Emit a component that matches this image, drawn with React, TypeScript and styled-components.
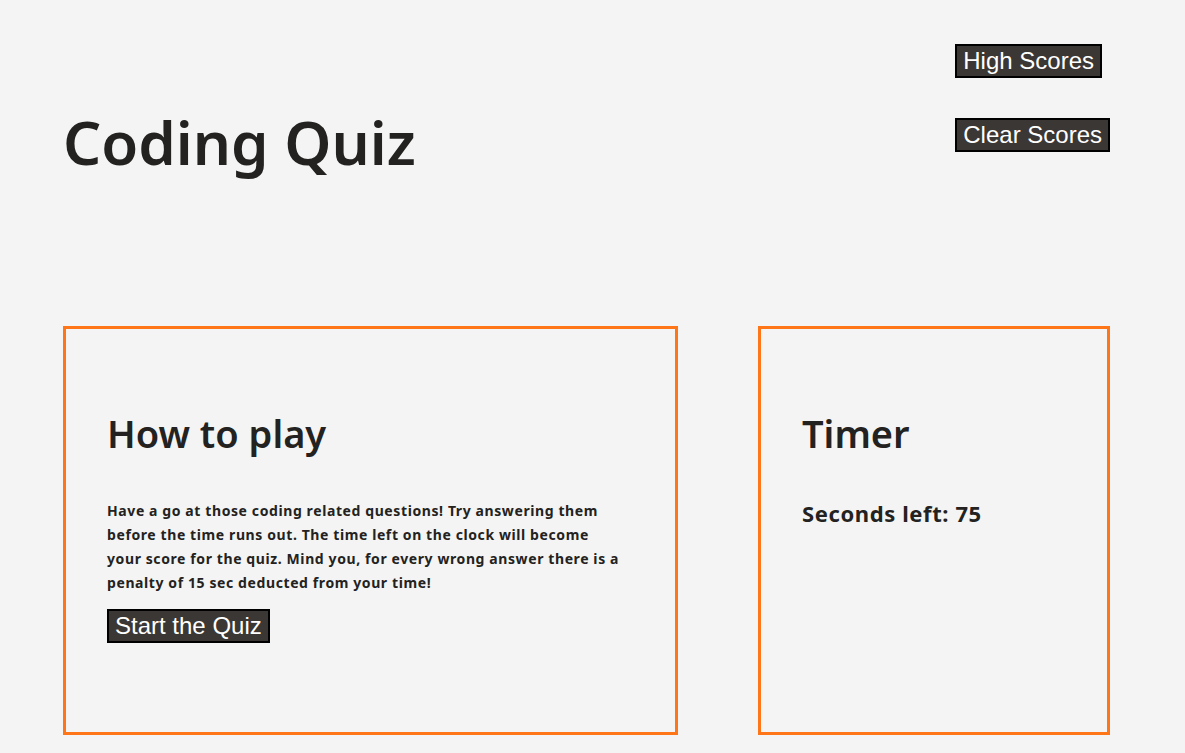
import React from "react";
import styled, { createGlobalStyle } from "styled-components";

const Global = createGlobalStyle`
  html, body { margin: 0; padding: 0; background: #f4f4f4; }
  body { font-family: "Noto Sans", "Open Sans", sans-serif; color: #232220; }
`;

const Page = styled.div`
  width: 1185px;
  height: 753px;
  overflow: hidden;
  box-sizing: border-box;
  padding: 44px 75px 0 63px;
`;

const Header = styled.header`
  display: flex;
  justify-content: space-between;
  align-items: flex-start;
  height: 282px;
`;

const Title = styled.h1`
  margin: 68px 0 0;
  font-size: 60px;
  font-weight: 600;
  line-height: 1;
`;

const Nav = styled.nav`
  display: flex;
  flex-direction: column;
  align-items: flex-start;
  gap: 40px;
`;

const Button = styled.button`
  font-family: "Liberation Sans", Arial, sans-serif;
  font-size: 24px;
  line-height: 26px;
  color: #ffffff;
  background: #3b3735;
  border: 2px solid #000;
  padding: 2px 6px;
  margin: 0;
  cursor: pointer;
`;

const Main = styled.main`
  display: grid;
  grid-template-columns: 615px 352px;
  column-gap: 80px;
`;

const Card = styled.section`
  border: 3.5px solid #ff7619;
  height: 409px;
  box-sizing: border-box;
  padding: 80px 40px 0 41px;
`;

const Heading = styled.h2`
  margin: 0 0 42px;
  font-size: 38px;
  font-weight: 600;
  line-height: 48px;
`;

const Para = styled.p`
  margin: 0 0 14px;
  max-width: 512px;
  font-size: 14px;
  font-weight: 700;
  line-height: 24px;
  letter-spacing: 0.6px;
`;

const Seconds = styled.p`
  margin: 0;
  font-size: 22px;
  font-weight: 700;
  line-height: 28px;
  letter-spacing: 0.6px;
`;

export default function App() {
  return (
    <>
      <Global />
      <Page>
        <Header>
          <Title>Coding Quiz</Title>
          <Nav>
            <Button>High Scores</Button>
            <Button>Clear Scores</Button>
          </Nav>
        </Header>
        <Main>
          <Card>
            <Heading>How to play</Heading>
            <Para>
              Have a go at those coding related questions! Try answering them
              before the time runs out. The time left on the clock will become
              your score for the quiz. Mind you, for every wrong answer there is
              a penalty of 15 sec deducted from your time!
            </Para>
            <Button>Start the Quiz</Button>
          </Card>
          <Card>
            <Heading>Timer</Heading>
            <Seconds>Seconds left: 75</Seconds>
          </Card>
        </Main>
      </Page>
    </>
  );
}
